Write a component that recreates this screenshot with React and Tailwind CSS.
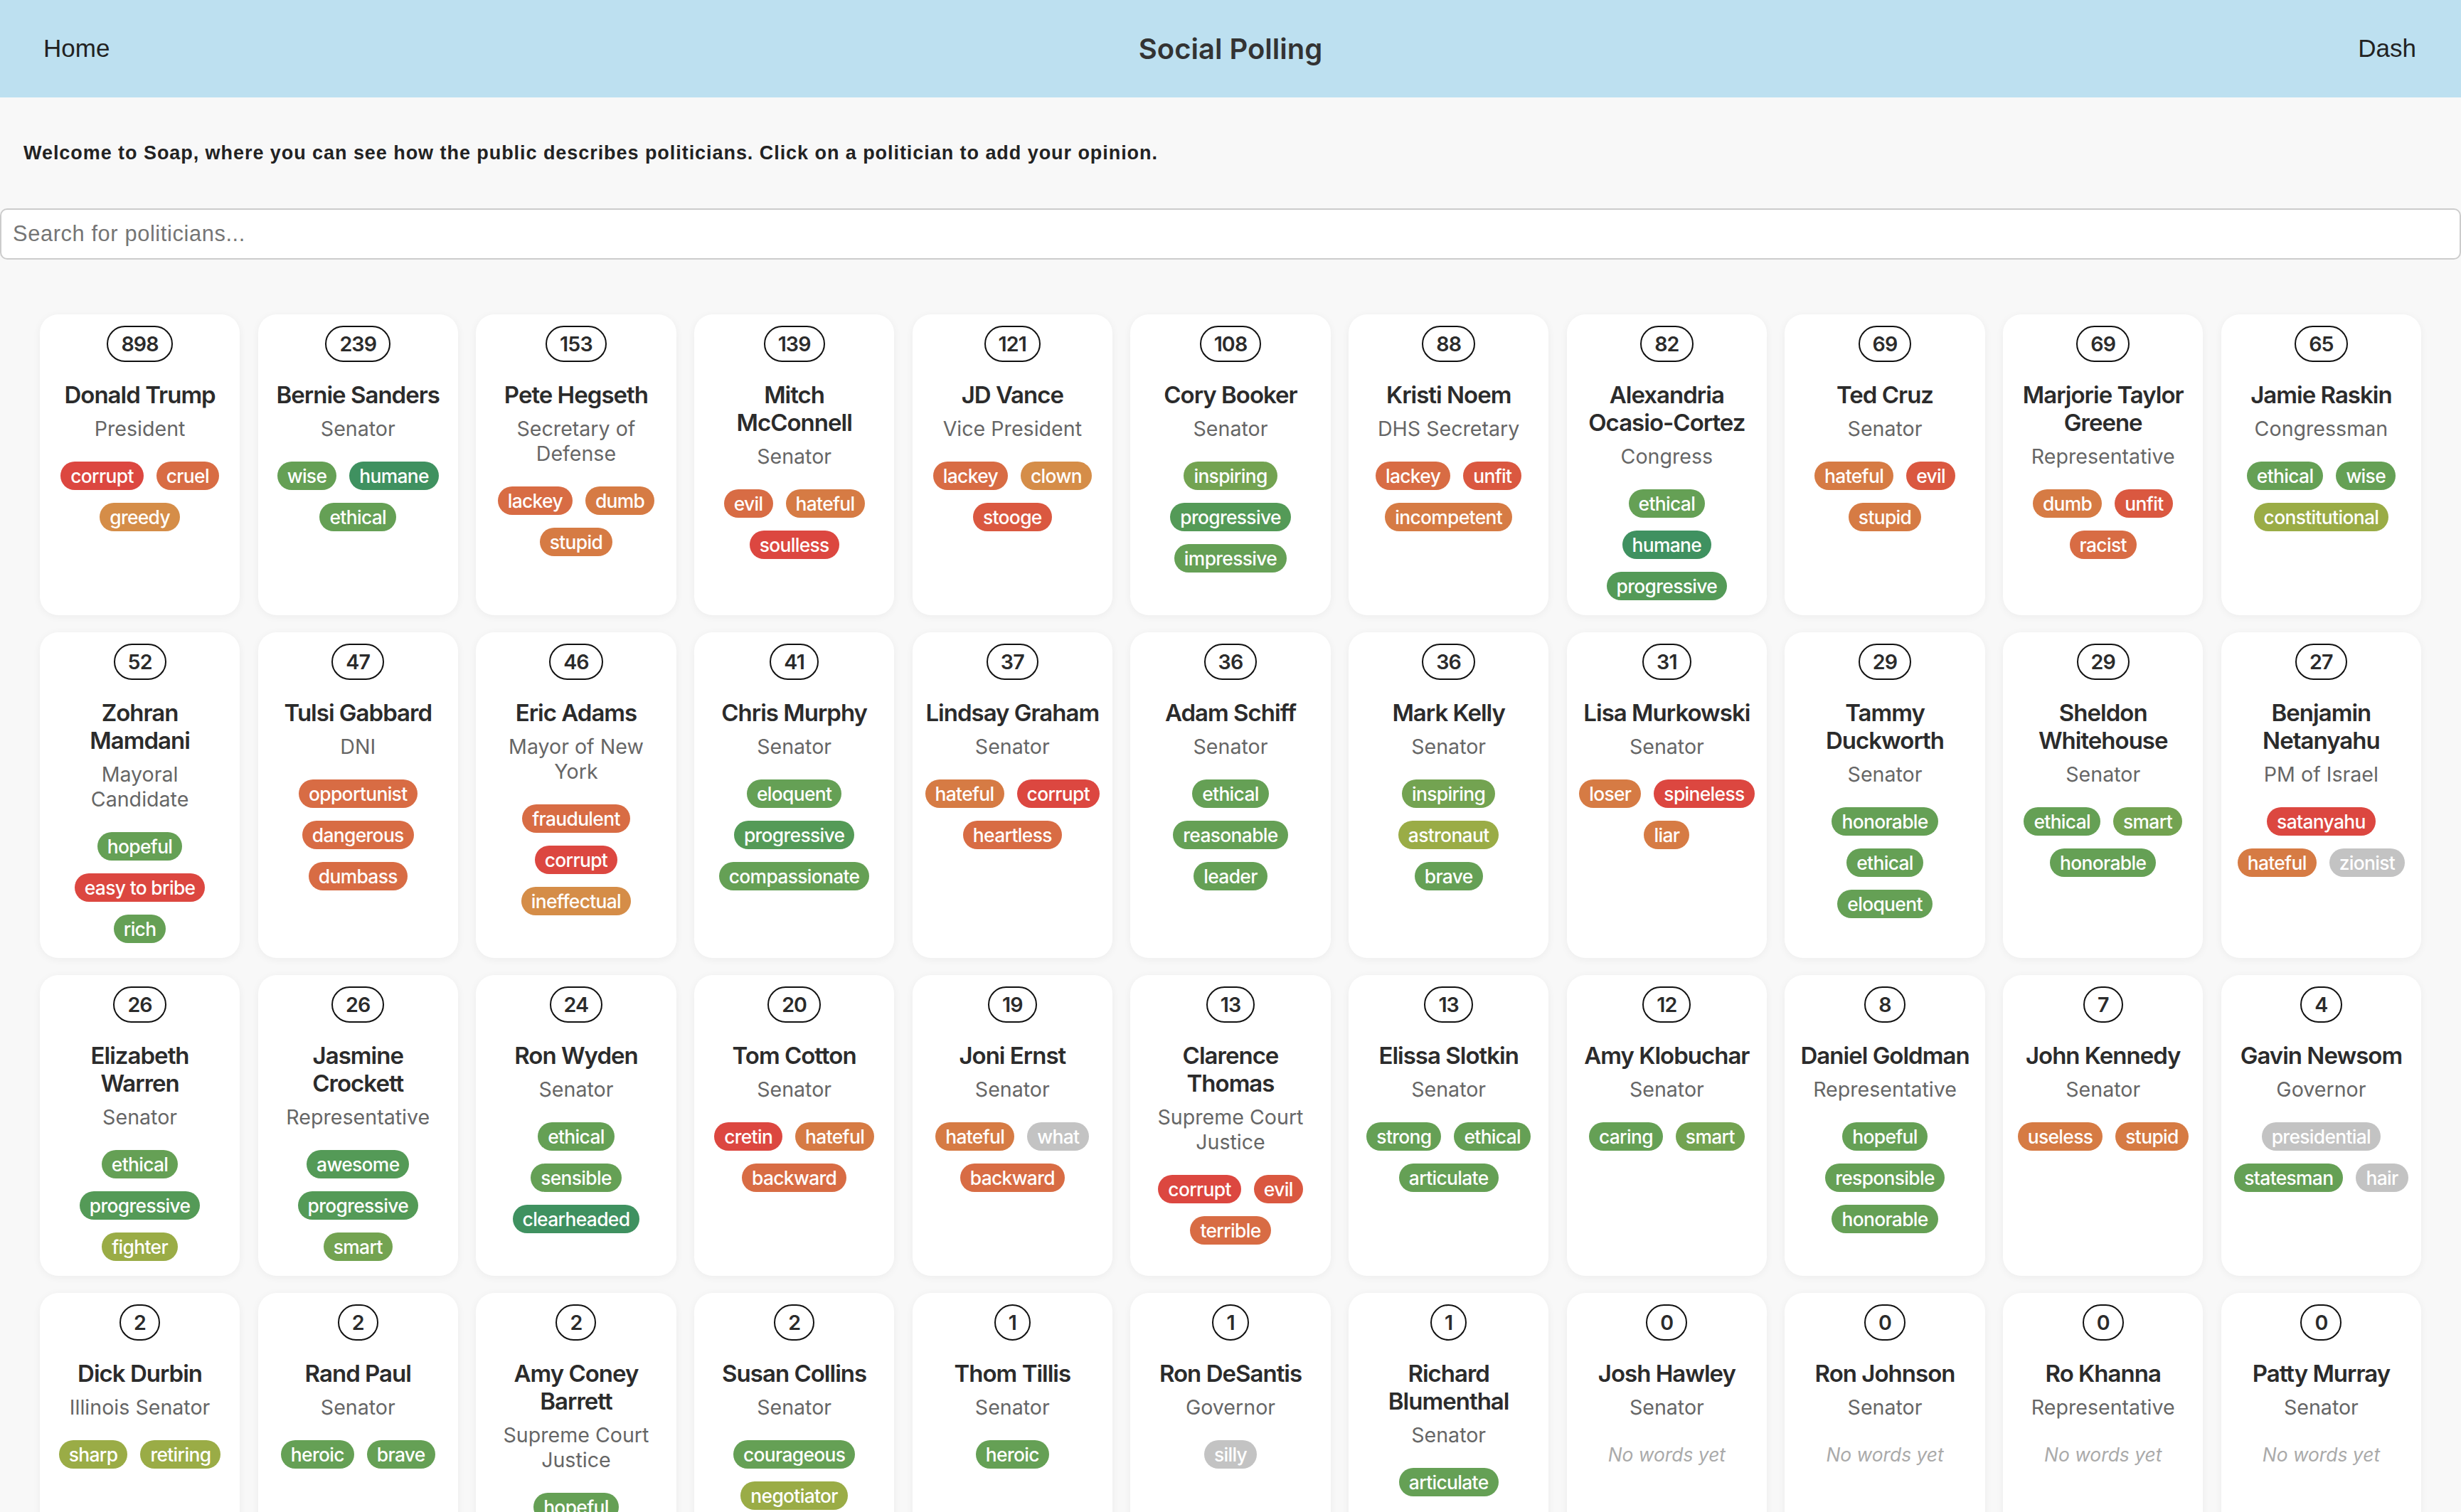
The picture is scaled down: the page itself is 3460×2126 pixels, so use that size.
import { useState } from 'react';

const C = {
  red: '#dc4740',
  redOrange: '#da5840',
  orange: '#d86c44',
  tan: '#d67b44',
  amber: '#d58d48',
  green: '#65a055',
  lime: '#73a351',
  prog: '#549a57',
  teal: '#3f9160',
  olive: '#9aac46',
  gray: '#c3c3c3',
};

const politicians = [
  { count: 898, name: 'Donald Trump', title: 'President', words: [['corrupt', C.red], ['cruel', C.orange], ['greedy', C.amber]] },
  { count: 239, name: 'Bernie Sanders', title: 'Senator', words: [['wise', C.green], ['humane', C.teal], ['ethical', C.green]] },
  { count: 153, name: 'Pete Hegseth', title: 'Secretary of Defense', words: [['lackey', C.orange], ['dumb', C.tan], ['stupid', C.tan]] },
  { count: 139, name: 'Mitch McConnell', title: 'Senator', words: [['evil', C.orange], ['hateful', C.tan], ['soulless', C.red]] },
  { count: 121, name: 'JD Vance', title: 'Vice President', words: [['lackey', C.orange], ['clown', C.amber], ['stooge', C.redOrange]] },
  { count: 108, name: 'Cory Booker', title: 'Senator', words: [['inspiring', C.lime], ['progressive', C.prog], ['impressive', C.green]] },
  { count: 88, name: 'Kristi Noem', title: 'DHS Secretary', words: [['lackey', C.orange], ['unfit', C.redOrange], ['incompetent', C.tan]] },
  { count: 82, name: 'Alexandria Ocasio-Cortez', title: 'Congress', words: [['ethical', C.green], ['humane', C.teal], ['progressive', C.prog]] },
  { count: 69, name: 'Ted Cruz', title: 'Senator', words: [['hateful', C.tan], ['evil', C.redOrange], ['stupid', C.tan]] },
  { count: 69, name: 'Marjorie Taylor Greene', title: 'Representative', words: [['dumb', C.tan], ['unfit', C.redOrange], ['racist', C.orange]] },
  { count: 65, name: 'Jamie Raskin', title: 'Congressman', words: [['ethical', C.green], ['wise', C.green], ['constitutional', C.olive]] },

  { count: 52, name: 'Zohran Mamdani', title: 'Mayoral Candidate', words: [['hopeful', C.green], ['easy to bribe', C.red], ['rich', C.green]] },
  { count: 47, name: 'Tulsi Gabbard', title: 'DNI', words: [['opportunist', C.orange], ['dangerous', C.orange], ['dumbass', C.orange]] },
  { count: 46, name: 'Eric Adams', title: 'Mayor of New York', words: [['fraudulent', C.orange], ['corrupt', C.red], ['ineffectual', C.amber]] },
  { count: 41, name: 'Chris Murphy', title: 'Senator', words: [['eloquent', C.green], ['progressive', C.prog], ['compassionate', C.green]] },
  { count: 37, name: 'Lindsay Graham', title: 'Senator', words: [['hateful', C.tan], ['corrupt', C.red], ['heartless', C.orange]] },
  { count: 36, name: 'Adam Schiff', title: 'Senator', words: [['ethical', C.green], ['reasonable', C.green], ['leader', C.green]] },
  { count: 36, name: 'Mark Kelly', title: 'Senator', words: [['inspiring', C.lime], ['astronaut', C.olive], ['brave', C.green]] },
  { count: 31, name: 'Lisa Murkowski', title: 'Senator', words: [['loser', C.tan], ['spineless', C.red], ['liar', C.tan]] },
  { count: 29, name: 'Tammy Duckworth', title: 'Senator', words: [['honorable', C.green], ['ethical', C.green], ['eloquent', C.green]] },
  { count: 29, name: 'Sheldon Whitehouse', title: 'Senator', words: [['ethical', C.green], ['smart', C.lime], ['honorable', C.green]] },
  { count: 27, name: 'Benjamin Netanyahu', title: 'PM of Israel', words: [['satanyahu', C.red], ['hateful', C.tan], ['zionist', C.gray]] },

  { count: 26, name: 'Elizabeth Warren', title: 'Senator', words: [['ethical', C.green], ['progressive', C.prog], ['fighter', C.olive]] },
  { count: 26, name: 'Jasmine Crockett', title: 'Representative', words: [['awesome', C.prog], ['progressive', C.prog], ['smart', C.lime]] },
  { count: 24, name: 'Ron Wyden', title: 'Senator', words: [['ethical', C.green], ['sensible', C.green], ['clearheaded', C.teal]] },
  { count: 20, name: 'Tom Cotton', title: 'Senator', words: [['cretin', C.red], ['hateful', C.tan], ['backward', C.orange]] },
  { count: 19, name: 'Joni Ernst', title: 'Senator', words: [['hateful', C.tan], ['what', C.gray], ['backward', C.orange]] },
  { count: 13, name: 'Clarence Thomas', title: 'Supreme Court Justice', words: [['corrupt', C.red], ['evil', C.redOrange], ['terrible', C.orange]] },
  { count: 13, name: 'Elissa Slotkin', title: 'Senator', words: [['strong', C.green], ['ethical', C.green], ['articulate', C.green]] },
  { count: 12, name: 'Amy Klobuchar', title: 'Senator', words: [['caring', C.green], ['smart', C.lime]] },
  { count: 8, name: 'Daniel Goldman', title: 'Representative', words: [['hopeful', C.green], ['responsible', C.green], ['honorable', C.green]] },
  { count: 7, name: 'John Kennedy', title: 'Senator', words: [['useless', C.tan], ['stupid', C.tan]] },
  { count: 4, name: 'Gavin Newsom', title: 'Governor', words: [['presidential', C.gray], ['statesman', C.green], ['hair', C.gray]] },

  { count: 2, name: 'Dick Durbin', title: 'Illinois Senator', words: [['sharp', C.olive], ['retiring', C.olive]] },
  { count: 2, name: 'Rand Paul', title: 'Senator', words: [['heroic', C.green], ['brave', C.green]] },
  { count: 2, name: 'Amy Coney Barrett', title: 'Supreme Court Justice', words: [['hopeful', C.green]] },
  { count: 2, name: 'Susan Collins', title: 'Senator', words: [['courageous', C.green], ['negotiator', C.olive]] },
  { count: 1, name: 'Thom Tillis', title: 'Senator', words: [['heroic', C.green]] },
  { count: 1, name: 'Ron DeSantis', title: 'Governor', words: [['silly', C.gray]] },
  { count: 1, name: 'Richard Blumenthal', title: 'Senator', words: [['articulate', C.green]] },
  { count: 0, name: 'Josh Hawley', title: 'Senator', words: [] },
  { count: 0, name: 'Ron Johnson', title: 'Senator', words: [] },
  { count: 0, name: 'Ro Khanna', title: 'Representative', words: [] },
  { count: 0, name: 'Patty Murray', title: 'Senator', words: [] },
];

const PoliticianCard = ({ p }) => (
  <div className="bg-white rounded-[26px] shadow-[0_2px_12px_rgba(0,0,0,0.05)] flex flex-col items-center text-center px-[16px] pt-[16px] pb-[21px] cursor-pointer">
    <div className="rounded-full border-2 border-[#111] px-[18px] py-[6px] text-[28.6px] leading-[35px] font-semibold tracking-[-0.03em] text-[#2b2b2b]">
      {p.count}
    </div>
    <h3 className="mt-[26.5px] text-[33px] leading-[39px] font-semibold tracking-[-0.03em] text-[#2b2b2b]">{p.name}</h3>
    <p className="mt-[10.5px] text-[28.6px] leading-[35px] text-[#666]">{p.title}</p>
    {p.words.length > 0 ? (
      <div className="mt-[29px] flex flex-wrap justify-center gap-x-[18px] gap-y-[18px]">
        {p.words.map(([word, color]) => (
          <span key={word} className="h-[40px] px-[14px] rounded-full text-[26.4px] leading-[40px] font-medium tracking-[-0.025em] text-white whitespace-nowrap" style={{ backgroundColor: color }}>
            {word}
          </span>
        ))}
      </div>
    ) : (
      <p className="mt-[29px] h-[40px] leading-[40px] text-[26.4px] italic text-[#aaa]">No words yet</p>
    )}
  </div>
);

const App = () => {
  const [query, setQuery] = useState('');
  const shown = politicians.filter((p) => p.name.toLowerCase().includes(query.toLowerCase()));

  return (
    <div className="min-h-screen bg-[#f8f8f8] font-['Inter',sans-serif]">
      {/* Header */}
      <header className="h-[137px] bg-[#bde0f0] grid grid-cols-3 items-center px-[61px]">
        <a className="justify-self-start text-[35px] text-[#222] font-['Liberation_Sans',Arial,sans-serif] cursor-pointer">Home</a>
        <h1 className="justify-self-center text-[40px] font-semibold text-[#333]">Social Polling</h1>
        <a className="justify-self-end mr-[2px] text-[35px] text-[#222] font-['Liberation_Sans',Arial,sans-serif] cursor-pointer">Dash</a>
      </header>

      <p className="mt-[62px] px-[33px] text-[27px] leading-[32px] font-bold tracking-[0.035em] text-[#222] font-['Liberation_Sans',Arial,sans-serif]">
        Welcome to Soap, where you can see how the public describes politicians. Click on a politician to add your opinion.
      </p>

      <input
        type="text"
        value={query}
        onChange={(e) => setQuery(e.target.value)}
        placeholder="Search for politicians..."
        className="mt-[62px] block w-full h-[72px] bg-white border-2 border-[#ccc] rounded-[10px] px-[16px] text-[30.8px] tracking-[0.02em] text-[#222] placeholder:text-[#757575] font-['Liberation_Sans',Arial,sans-serif] outline-none"
      />

      <div className="mt-[77px] px-[56px] pb-[60px] grid grid-cols-11 gap-x-[25.5px] gap-y-[24px]">
        {shown.map((p) => (
          <PoliticianCard key={p.name} p={p} />
        ))}
      </div>
    </div>
  );
};

export default App;
